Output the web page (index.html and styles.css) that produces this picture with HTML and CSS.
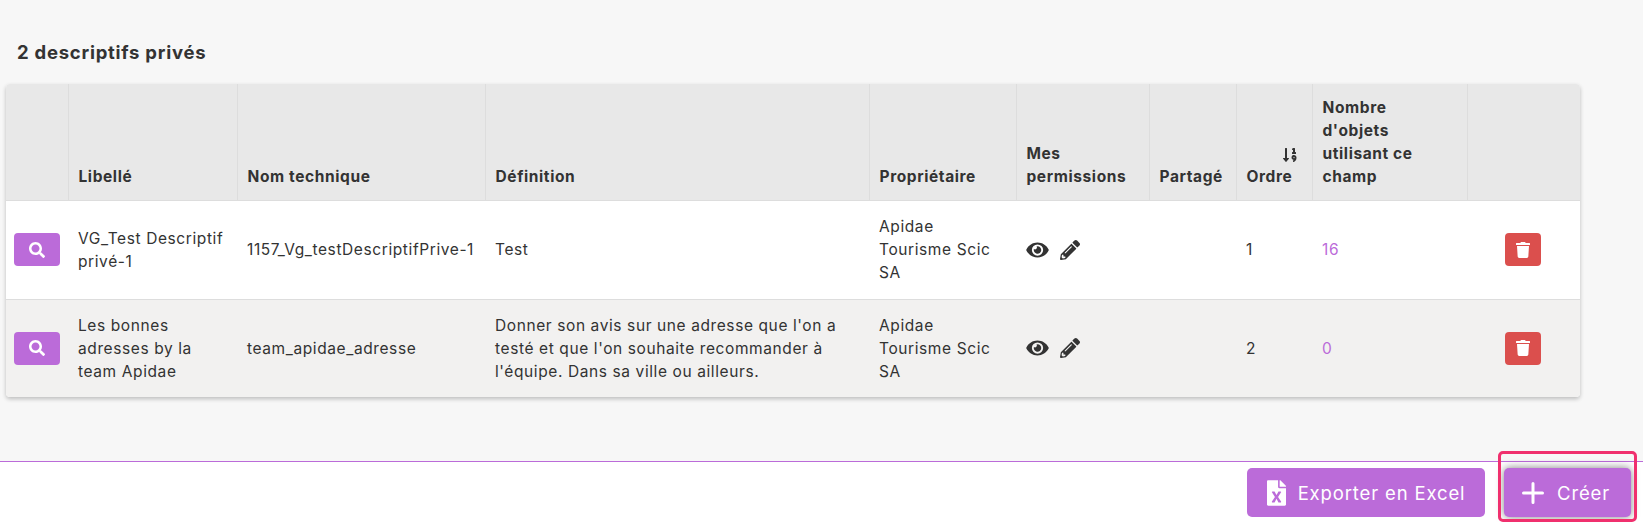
FILE: index.html
```html
<!DOCTYPE html>
<html lang="fr">
<head>
<meta charset="utf-8">
<title>Descriptifs privés</title>
<link rel="stylesheet" href="styles.css">
</head>
<body>
<main class="content">
  <h2 class="title">2 descriptifs privés</h2>
  <div class="table-card">
    <table class="grid">
      <colgroup>
        <col class="c-search"><col class="c-label"><col class="c-tech"><col class="c-def"><col class="c-owner"><col class="c-perm"><col class="c-share"><col class="c-order"><col class="c-count"><col class="c-del">
      </colgroup>
      <thead>
        <tr>
          <th></th>
          <th>Libellé</th>
          <th>Nom technique</th>
          <th>Définition</th>
          <th>Propriétaire</th>
          <th>Mes permissions</th>
          <th>Partagé</th>
          <th>
            <span class="sort"><svg class="ico-sort" viewBox="0 0 448 512"><path d="M304 96h16v64h-16a16 16 0 0 0-16 16v32a16 16 0 0 0 16 16h96a16 16 0 0 0 16-16v-32a16 16 0 0 0-16-16h-16V48a16 16 0 0 0-16-16h-48a16 16 0 0 0-14.29 8.83l-16 32A16 16 0 0 0 304 96zm26.15 162.91a79 79 0 0 0-55 54.17c-14.25 51.05 21.21 97.77 68.85 102.53a84.07 84.07 0 0 1-20.85 12.91c-7.57 3.4-10.8 12.47-8.18 20.34l9.9 20c2.87 8.63 12.53 13.49 20.9 9.91 58-24.76 86.25-61.61 86.25-132V336c-.02-51.21-48.4-91.34-101.85-77.09zM352 356a20 20 0 1 1 20-20 20 20 0 0 1-20 20zm-176-4h-48V48a16 16 0 0 0-16-16H80a16 16 0 0 0-16 16v304H16c-14.19 0-21.36 17.24-11.29 27.31l80 96a16 16 0 0 0 22.62 0l80-96C197.35 369.26 190.22 352 176 352z"/></svg></span>
            Ordre
          </th>
          <th>Nombre d'objets utilisant ce champ</th>
          <th></th>
        </tr>
      </thead>
      <tbody>
        <tr>
          <td class="tight"><button class="btn-small btn-purple"><svg class="ico-btn" viewBox="0 0 512 512"><path d="M505 442.7L405.3 343c-4.5-4.5-10.6-7-17-7H372c27.6-35.3 44-79.7 44-128C416 93.1 322.9 0 208 0S0 93.1 0 208s93.1 208 208 208c48.3 0 92.7-16.4 128-44v16.3c0 6.4 2.5 12.5 7 17l99.7 99.7c9.4 9.4 24.6 9.4 33.9 0l28.3-28.3c9.4-9.4 9.4-24.6.1-34zM208 336c-70.7 0-128-57.2-128-128 0-70.7 57.2-128 128-128 70.7 0 128 57.2 128 128 0 70.7-57.2 128-128 128z"/></svg></button></td>
          <td>VG_Test Descriptif privé-1</td>
          <td>1157_Vg_testDescriptifPrive-1</td>
          <td>Test</td>
          <td>Apidae Tourisme Scic SA</td>
          <td>
            <span class="perms">
              <svg class="ico-eye" viewBox="0 0 576 512"><path d="M572.52 241.4C518.29 135.59 410.93 64 288 64S57.68 135.64 3.48 241.41a32.35 32.35 0 0 0 0 29.19C57.71 376.41 165.07 448 288 448s230.32-71.64 284.52-177.41a32.35 32.35 0 0 0 0-29.19zM288 400a144 144 0 1 1 144-144 143.93 143.93 0 0 1-144 144zm0-240a95.31 95.31 0 0 0-25.31 3.79 47.85 47.85 0 0 1-66.9 66.9A95.78 95.78 0 1 0 288 160z"/></svg>
              <svg class="ico-pen" viewBox="0 0 512 512"><path d="M497.9 142.1l-46.1 46.1c-4.7 4.7-12.3 4.7-17 0l-111-111c-4.7-4.7-4.7-12.3 0-17l46.1-46.1c18.7-18.7 49.1-18.7 67.9 0l60.1 60.1c18.8 18.7 18.8 49.1 0 67.9zM284.2 99.8L21.6 362.4.4 483.9c-2.9 16.4 11.4 30.6 27.8 27.8l121.5-21.3 262.6-262.6c4.7-4.7 4.7-12.3 0-17l-111-111c-4.8-4.7-12.4-4.7-17.1 0zM124.1 339.9c-5.5-5.5-5.5-14.3 0-19.8l154-154c5.5-5.5 14.3-5.5 19.8 0s5.5 14.3 0 19.8l-154 154c-5.5 5.5-14.3 5.5-19.8 0zM88 424h48v36.3l-64.5 11.3-31.1-31.1L51.7 376H88v48z"/></svg>
            </span>
          </td>
          <td></td>
          <td>1</td>
          <td><a class="count">16</a></td>
          <td class="center"><button class="btn-small btn-red"><svg class="ico-trash" viewBox="0 0 448 512"><path d="M432 32H312l-9.4-18.7A24 24 0 0 0 281.1 0H166.8a23.72 23.72 0 0 0-21.4 13.3L136 32H16A16 16 0 0 0 0 48v32a16 16 0 0 0 16 16h416a16 16 0 0 0 16-16V48a16 16 0 0 0-16-16zM53.2 467a48 48 0 0 0 47.9 45h245.8a48 48 0 0 0 47.9-45L416 128H32z"/></svg></button></td>
        </tr>
        <tr>
          <td class="tight"><button class="btn-small btn-purple"><svg class="ico-btn" viewBox="0 0 512 512"><path d="M505 442.7L405.3 343c-4.5-4.5-10.6-7-17-7H372c27.6-35.3 44-79.7 44-128C416 93.1 322.9 0 208 0S0 93.1 0 208s93.1 208 208 208c48.3 0 92.7-16.4 128-44v16.3c0 6.4 2.5 12.5 7 17l99.7 99.7c9.4 9.4 24.6 9.4 33.9 0l28.3-28.3c9.4-9.4 9.4-24.6.1-34zM208 336c-70.7 0-128-57.2-128-128 0-70.7 57.2-128 128-128 70.7 0 128 57.2 128 128 0 70.7-57.2 128-128 128z"/></svg></button></td>
          <td>Les bonnes adresses by la team Apidae</td>
          <td>team_apidae_adresse</td>
          <td>Donner son avis sur une adresse que l'on a testé et que l'on souhaite recommander à l'équipe. Dans sa ville ou ailleurs.</td>
          <td>Apidae Tourisme Scic SA</td>
          <td>
            <span class="perms">
              <svg class="ico-eye" viewBox="0 0 576 512"><path d="M572.52 241.4C518.29 135.59 410.93 64 288 64S57.68 135.64 3.48 241.41a32.35 32.35 0 0 0 0 29.19C57.71 376.41 165.07 448 288 448s230.32-71.64 284.52-177.41a32.35 32.35 0 0 0 0-29.19zM288 400a144 144 0 1 1 144-144 143.93 143.93 0 0 1-144 144zm0-240a95.31 95.31 0 0 0-25.31 3.79 47.85 47.85 0 0 1-66.9 66.9A95.78 95.78 0 1 0 288 160z"/></svg>
              <svg class="ico-pen" viewBox="0 0 512 512"><path d="M497.9 142.1l-46.1 46.1c-4.7 4.7-12.3 4.7-17 0l-111-111c-4.7-4.7-4.7-12.3 0-17l46.1-46.1c18.7-18.7 49.1-18.7 67.9 0l60.1 60.1c18.8 18.7 18.8 49.1 0 67.9zM284.2 99.8L21.6 362.4.4 483.9c-2.9 16.4 11.4 30.6 27.8 27.8l121.5-21.3 262.6-262.6c4.7-4.7 4.7-12.3 0-17l-111-111c-4.8-4.7-12.4-4.7-17.1 0zM124.1 339.9c-5.5-5.5-5.5-14.3 0-19.8l154-154c5.5-5.5 14.3-5.5 19.8 0s5.5 14.3 0 19.8l-154 154c-5.5 5.5-14.3 5.5-19.8 0zM88 424h48v36.3l-64.5 11.3-31.1-31.1L51.7 376H88v48z"/></svg>
            </span>
          </td>
          <td></td>
          <td>2</td>
          <td><a class="count">0</a></td>
          <td class="center"><button class="btn-small btn-red"><svg class="ico-trash" viewBox="0 0 448 512"><path d="M432 32H312l-9.4-18.7A24 24 0 0 0 281.1 0H166.8a23.72 23.72 0 0 0-21.4 13.3L136 32H16A16 16 0 0 0 0 48v32a16 16 0 0 0 16 16h416a16 16 0 0 0 16-16V48a16 16 0 0 0-16-16zM53.2 467a48 48 0 0 0 47.9 45h245.8a48 48 0 0 0 47.9-45L416 128H32z"/></svg></button></td>
        </tr>
      </tbody>
    </table>
  </div>
</main>
<footer class="actions">
  <button class="btn-large btn-export">
    <svg class="ico-file" viewBox="0 0 384 512"><path d="M224 136V0H24C10.7 0 0 10.7 0 24v464c0 13.3 10.7 24 24 24h336c13.3 0 24-10.7 24-24V160H248c-13.2 0-24-10.8-24-24zm60.1 106.5L224 336l60.1 93.5c5.1 8-.6 18.5-10.1 18.5h-34.9c-4.4 0-8.5-2.4-10.6-6.3C208.9 405.5 192 373 192 373c-6.1 14.1-9.5 19.1-36.6 68.8-2.1 3.9-6.1 6.3-10.5 6.3H110c-9.5 0-15.2-10.5-10.1-18.5l60.3-93.5-60.3-93.5c-5.2-8 .6-18.5 10.1-18.5h34.8c4.4 0 8.5 2.4 10.6 6.3 26.1 48.8 20 33.6 36.6 68.5 0 0 6.1-11.7 36.6-68.5 2.1-3.9 6.2-6.3 10.6-6.3H274c9.5-.1 15.2 10.4 10.1 18.4zM384 121.9v6.1H256V0h6.1c6.4 0 12.5 2.5 17 7l97.9 98c4.5 4.5 7 10.6 7 16.9z"/></svg>
    Exporter en Excel
  </button>
  <button class="btn-large btn-create">
    <svg class="ico-plus" viewBox="0 0 22 22"><path d="M11 1.5v19M1.5 11h19"/></svg>
    Créer
  </button>
  <span class="highlight"></span>
</footer>
</body>
</html>
```
FILE: styles.css
```css
* { box-sizing: border-box; }
html, body { margin: 0; height: 522px; overflow: hidden; }
body {
  background: #f7f7f7;
  color: #333;
  font-family: "Inter", "Liberation Sans", sans-serif;
  font-size: 15.5px;
  letter-spacing: 0.6px;
  display: flex;
  flex-direction: column;
}
.content { height: 461px; padding: 40px 63px 0 6px; }
.title {
  margin: 0 0 19px 11px;
  font-size: 18.5px;
  line-height: 25px;
  font-weight: 700;
  letter-spacing: 0.75px;
}
.table-card {
  width: 1574px;
  background: #fff;
  border-radius: 4px;
  box-shadow: 0 2px 4px rgba(0,0,0,.24);
  overflow: hidden;
}
.grid {
  width: 100%;
  table-layout: fixed;
  border-collapse: collapse;
}
.c-search { width: 62px; }
.c-label { width: 169px; }
.c-tech { width: 248px; }
.c-def { width: 384px; }
.c-owner { width: 147px; }
.c-perm { width: 133px; }
.c-share { width: 87px; }
.c-order { width: 76px; }
.c-count { width: 155px; }
.c-del { width: 113px; }
th {
  background: #e8e8e8;
  height: 116px;
  padding: 0 10px 12px;
  border-right: 1px solid #ddd;
  border-bottom: 1px solid #ddd;
  text-align: left;
  vertical-align: bottom;
  font-weight: 700;
  line-height: 23px;
}
th:last-child { border-right: 0; }
td {
  height: 99px;
  padding: 0 10px;
  line-height: 23px;
  vertical-align: middle;
  border-bottom: 1px solid #ddd;
}
tbody tr:last-child td { border-bottom: 0; height: 98px; }
tbody tr:nth-child(2) { background: #f2f1f0; }
td.tight { padding: 0 0 0 8px; }
td.center { text-align: center; padding-right: 12px; }
.count { color: #bb6bd9; }
.sort { display: block; height: 23px; text-align: right; }
.ico-sort { width: 16px; height: 16px; fill: #333; display: inline-block; vertical-align: top; margin-top: 5px; margin-right: 4px; }
.perms { display: flex; align-items: center; gap: 11px; }
.ico-eye { width: 23px; height: 20px; fill: #333; }
.ico-pen { width: 20px; height: 20px; fill: #333; }
.btn-small {
  display: flex;
  align-items: center;
  justify-content: center;
  border: 0;
  padding: 0;
  height: 33px;
  border-radius: 4px;
}
.btn-purple { background: #bb6bd9; width: 46px; }
.btn-red { background: #db4f4d; width: 36px; margin: 0 auto; }
.ico-btn { width: 16px; height: 16px; fill: #fff; }
.ico-trash { width: 14px; height: 16px; fill: #fff; }
.actions {
  position: relative;
  flex: 1;
  background: #fff;
  border-top: 1px solid #bb6bd9;
  display: flex;
  justify-content: flex-end;
  gap: 19px;
  padding: 6px 12px 5px 0;
}
.btn-large {
  display: flex;
  align-items: center;
  justify-content: center;
  height: 49px;
  border: 0;
  border-radius: 5px;
  background: #bb6bd9;
  color: #fff;
  font-family: inherit;
  font-size: 18.5px;
  letter-spacing: 0.85px;
}
.btn-export { width: 238px; gap: 12px; }
.btn-create { width: 127px; gap: 13px; padding: 0 3px 0 0; box-shadow: 0 0 8px rgba(0,0,0,.5); }
.ico-file { width: 19px; height: 26px; fill: #fff; }
.ico-plus { width: 22px; height: 22px; fill: none; stroke: #fff; stroke-width: 3; stroke-linecap: round; }
.highlight {
  position: absolute;
  left: 1498px;
  top: -11px;
  width: 139px;
  height: 71px;
  border: 3px solid #f0306e;
  border-radius: 5px;
  pointer-events: none;
}
```
